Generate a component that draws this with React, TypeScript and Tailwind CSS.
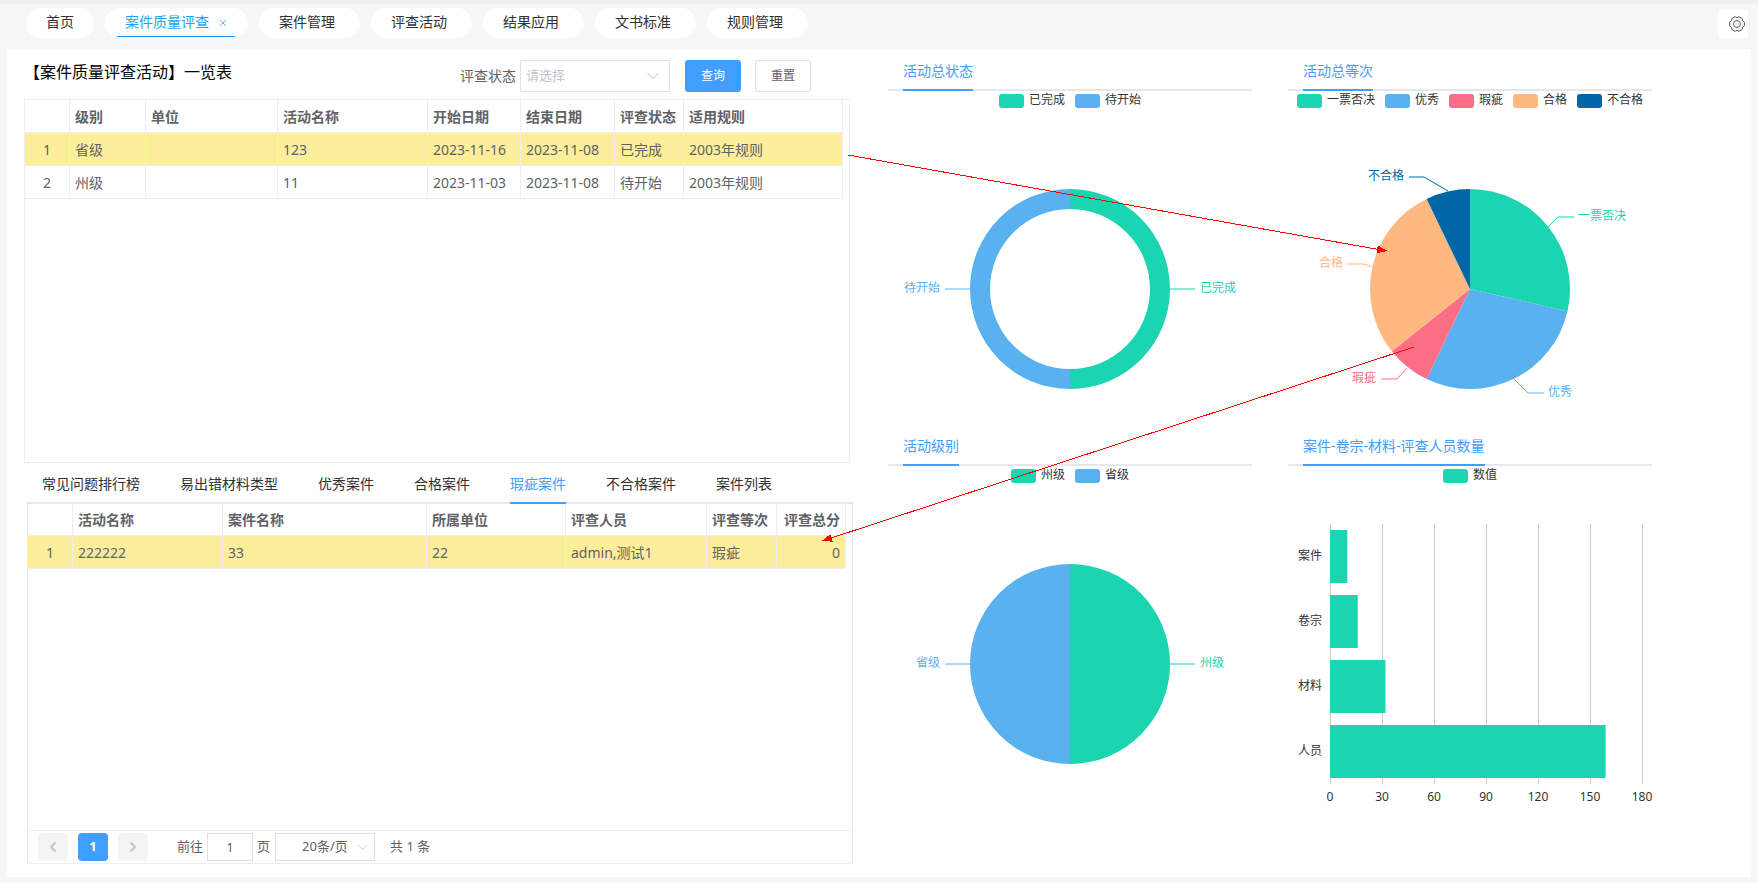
import React from 'react';
import { ChevronDown, ChevronLeft, ChevronRight } from 'lucide-react';

interface Slice {
  name: string;
  value: number;
  color: string;
}

interface Label {
  line: string;
  x: number;
  y: number;
  anchor: 'start' | 'end';
}

interface Column {
  title: string;
  width?: string;
  align?: string;
}

const GREEN = '#1bd4b0';
const BLUE = '#5ab1ef';

const navItems = ['案件管理', '评查活动', '结果应用', '文书标准', '规则管理'];

const tabs = ['常见问题排行榜', '易出错材料类型', '优秀案件', '合格案件', '瑕疵案件', '不合格案件', '案件列表'];

const activityColumns: Column[] = [
  { title: '', width: 'w-[45px]', align: 'text-center' },
  { title: '级别', width: 'w-[76px]' },
  { title: '单位', width: 'w-[132px]' },
  { title: '活动名称', width: 'w-[150px]' },
  { title: '开始日期', width: 'w-[93px]' },
  { title: '结束日期', width: 'w-[94px]' },
  { title: '评查状态', width: 'w-[69px]' },
  { title: '适用规则' },
];

const activityRows = [
  ['1', '省级', '', '123', '2023-11-16', '2023-11-08', '已完成', '2003年规则'],
  ['2', '州级', '', '11', '2023-11-03', '2023-11-08', '待开始', '2003年规则'],
];

const caseColumns: Column[] = [
  { title: '', width: 'w-[45px]', align: 'text-center' },
  { title: '活动名称', width: 'w-[150px]' },
  { title: '案件名称', width: 'w-[204px]' },
  { title: '所属单位', width: 'w-[139px]' },
  { title: '评查人员' },
  { title: '评查等次', width: 'w-[70px]' },
  { title: '评查总分', width: 'w-[69px]', align: 'text-right' },
];

const caseRows = [['1', '222222', '33', '22', 'admin,测试1', '瑕疵', '0']];

const statusData: Slice[] = [
  { name: '已完成', value: 1, color: GREEN },
  { name: '待开始', value: 1, color: BLUE },
];

const levelData: Slice[] = [
  { name: '州级', value: 1, color: GREEN },
  { name: '省级', value: 1, color: BLUE },
];

const gradeData: Slice[] = [
  { name: '一票否决', value: 4, color: GREEN },
  { name: '优秀', value: 4, color: BLUE },
  { name: '瑕疵', value: 1, color: '#fb6e85' },
  { name: '合格', value: 4, color: '#ffb880' },
  { name: '不合格', value: 1, color: '#0067a6' },
];

const countData = [
  { name: '案件', value: 10 },
  { name: '卷宗', value: 16 },
  { name: '材料', value: 32 },
  { name: '人员', value: 159 },
];

const halfLabels: Label[] = [
  { line: '282,178 307,178', x: 312, y: 176, anchor: 'start' },
  { line: '82,178 57,178', x: 52, y: 176, anchor: 'end' },
];

const gradeLabels: Label[] = [
  { line: '260,116 270,106 286,106', x: 290, y: 104, anchor: 'start' },
  { line: '226,268 240,282 256,282', x: 260, y: 280, anchor: 'start' },
  { line: '119,257 109,268 93,268', x: 88, y: 266, anchor: 'end' },
  { line: '85,156 75,153 59,153', x: 55, y: 151, anchor: 'end' },
  { line: '160,80 136,66 121,66', x: 116, y: 64, anchor: 'end' },
];

// Point on a circle around the chart centre, clockwise from 12 o'clock
const point = (ratio: number, r: number) => {
  const angle = ratio * Math.PI * 2;
  return `${182 + r * Math.sin(angle)},${178 - r * Math.cos(angle)}`;
};

const slicePath = (from: number, to: number, inner: number) => {
  const large = to - from > 0.5 ? 1 : 0;
  return `M${point(from, 100)} A100,100 0 ${large} 1 ${point(to, 100)} L${point(to, inner)} A${inner},${inner} 0 ${large} 0 ${point(from, inner)} Z`;
};

const PieChart: React.FC<{ data: Slice[]; labels: Label[]; inner?: number }> = ({ data, labels, inner = 0 }) => {
  const total = data.reduce((sum, d) => sum + d.value, 0);
  let start = 0;
  return (
    <svg viewBox="0 0 364 315" className="block w-full text-xs">
      {data.map((d, i) => {
        const from = start;
        start += d.value / total;
        return (
          <g key={d.name} fill={d.color}>
            <path d={slicePath(from, start, inner)} />
            <polyline points={labels[i].line} fill="none" stroke={d.color} />
            <text x={labels[i].x} y={labels[i].y} textAnchor={labels[i].anchor} dominantBaseline="central">
              {d.name}
            </text>
          </g>
        );
      })}
    </svg>
  );
};

const BarChart: React.FC = () => (
  <svg viewBox="0 0 364 315" className="block w-full overflow-visible text-xs" fill="#333">
    {[0, 30, 60, 90, 120, 150, 180].map((tick, i) => (
      <g key={tick}>
        <path d={`M${42.5 + i * 52},38 V298`} stroke="#ccc" />
        <text x={42 + i * 52} y={310} textAnchor="middle" dominantBaseline="central">
          {tick}
        </text>
      </g>
    ))}
    {countData.map((d, i) => (
      <g key={d.name}>
        <rect x={42} y={44 + i * 65} width={(d.value * 52) / 30} height={53} fill={GREEN} />
        <text x={34} y={69 + i * 65} textAnchor="end" dominantBaseline="central">
          {d.name}
        </text>
      </g>
    ))}
  </svg>
);

const ChartCard: React.FC<{ title: string; legend: { name: string; color: string }[]; children: React.ReactNode }> = ({
  title,
  legend,
  children,
}) => (
  <section>
    <div className="h-10 border-b-2 border-[#e4e7ed] pl-[15px]">
      <h3 className="inline-block h-10 border-b-2 border-[#409eff] text-sm leading-10 text-[#409eff]">{title}</h3>
    </div>
    <ul className="flex h-5 items-start justify-center gap-[10px] pt-[3px] text-xs leading-3 text-[#333]">
      {legend.map((item) => (
        <li key={item.name} className="flex gap-[5px]">
          <span className="h-[14px] w-[25px] rounded-[3px]" style={{ backgroundColor: item.color }} />
          {item.name}
        </li>
      ))}
    </ul>
    {children}
  </section>
);

const DataTable: React.FC<{ columns: Column[]; rows: string[][]; headHeight: string }> = ({
  columns,
  rows,
  headHeight,
}) => (
  <table className="w-full table-fixed border-separate border-spacing-0 text-sm leading-5 text-[#606266]">
    <thead>
      <tr className={headHeight}>
        {columns.map((col, i) => (
          <th
            key={i}
            className={`border-r border-b border-[#ebeef5] px-[5px] pt-px font-bold whitespace-nowrap ${col.width ?? ''} ${col.align ?? 'text-left'}`}
          >
            {col.title}
          </th>
        ))}
      </tr>
    </thead>
    <tbody>
      {rows.map((row, r) => (
        <tr key={r} className={r === 0 ? 'h-[33px] bg-[#fcee9b]' : 'h-[33px]'}>
          {row.map((cell, i) => (
            <td
              key={i}
              className={`border-r border-b border-[#ebeef5] px-[5px] pt-[2px] whitespace-nowrap ${columns[i].align ?? 'text-left'}`}
            >
              {cell}
            </td>
          ))}
        </tr>
      ))}
    </tbody>
  </table>
);

const App: React.FC = () => {
  return (
    <div className="relative min-h-screen bg-[#f7f7f7] px-[7px] pb-[6px] font-['Noto_Sans','Noto_Sans_CJK_SC',sans-serif]">
      <div className="-mx-[7px] h-1 bg-[#f0f0f0]" />

      {/* Top navigation */}
      <header className="flex h-[45px] items-start pt-1 pl-[19px]">
        <nav className="flex gap-[11px] text-sm leading-7 text-[#303133]">
          <a href="#" className="h-[30px] rounded-full bg-white px-5">
            首页
          </a>
          <div className="h-[30px] rounded-full bg-white pr-[13px] pl-3">
            <div className="flex h-[29px] items-start border-b border-[#1890ff] px-2 text-[#1aa5f8]">
              <a href="#">案件质量评查</a>
              <button aria-label="关闭" className="ml-[10px] flex h-[30px] items-center">
                <svg width="8" height="8" viewBox="0 0 8 8" stroke="#6fb4f5" className="block">
                  <path d="M1 1l6 6M7 1l-6 6" />
                </svg>
              </button>
            </div>
          </div>
          {navItems.map((item) => (
            <a key={item} href="#" className="h-[30px] rounded-full bg-white pr-[25px] pl-5">
              {item}
            </a>
          ))}
        </nav>
        <button aria-label="设置" className="mt-px mr-[3px] ml-auto h-[30px] w-[30px] rounded bg-white pl-[11px]">
          <svg width="16" height="16" viewBox="0 0 16 16" fill="none" stroke="#606266" strokeLinejoin="round">
            <path d="M15.37 6.160V9.840Q12.5 10.6 13.28 13.47L10.09 15.31Q8 13.2 5.910 15.31L2.720 13.47Q3.500 10.6 .63 9.840V6.160Q3.500 5.400 2.720 2.530L5.910 .69Q8 2.800 10.09 .69L13.28 2.530Q12.5 5.400 15.37 6.160Z" />
            <circle cx="8" cy="8" r="3.500" />
          </svg>
        </button>
      </header>

      <main className="flex min-h-[828px] bg-white">
        {/* Tables */}
        <div className="flex w-1/2 flex-col pt-[11px] pr-[26px] pb-[13px] pl-[17px]">
          <div className="flex h-[39px] items-start">
            <h2 className="text-base leading-6 whitespace-nowrap text-black">【案件质量评查活动】一览表</h2>
            <form className="mr-[42px] ml-auto flex items-center text-sm text-[#606266]">
              <label htmlFor="status">评查状态</label>
              <div className="relative ml-1">
                <select
                  id="status"
                  className="block h-8 w-[150px] appearance-none border border-[#dcdfe6] bg-white px-[5px] pb-[2px] text-[13px] text-[#c0c4cc]"
                >
                  <option>请选择</option>
                </select>
                <ChevronDown size={20} strokeWidth={1} className="pointer-events-none absolute top-[6px] right-[7px] text-[#a8abb2]" />
              </div>
              <button type="button" className="ml-[15px] h-8 w-14 rounded-[3px] bg-[#409eff] text-xs text-white">
                查询
              </button>
              <button type="reset" className="ml-[14px] h-8 w-14 rounded-[3px] border border-[#dcdfe6] bg-white text-xs">
                重置
              </button>
            </form>
          </div>

          <div className="mr-[3px] h-[364px] border border-[#ebeef5] pr-[6px]">
            <DataTable columns={activityColumns} rows={activityRows} headHeight="h-[33px]" />
          </div>

          <div className="ml-[3px] flex flex-1 flex-col">
            <div className="flex h-[41px] gap-10 border-b-2 border-[#e4e7ed] pl-[15px] text-sm text-[#303133]">
              {tabs.map((tab) => (
                <button
                  key={tab}
                  className={
                    tab === '瑕疵案件'
                      ? 'h-[41px] border-b-2 border-[#409eff] pt-[3px] whitespace-nowrap text-[#409eff]'
                      : 'h-[41px] border-b-2 border-transparent pt-[3px] whitespace-nowrap'
                  }
                >
                  {tab}
                </button>
              ))}
            </div>
            <div className="flex-1 border-x border-[#ebeef5] pr-[6px]">
              <DataTable columns={caseColumns} rows={caseRows} headHeight="h-8" />
            </div>

            {/* Pagination */}
            <div className="flex h-[34px] items-center border border-[#ebeef5] pl-[10px] text-[13px] text-[#606266]">
              <button aria-label="上一页" className="flex h-7 w-[30px] items-center justify-center rounded-sm bg-[#f4f4f5] text-[#c0c4cc]">
                <ChevronLeft size={16} strokeWidth={3} />
              </button>
              <button className="ml-[10px] h-7 w-[30px] rounded-sm bg-[#409eff] font-bold text-white">1</button>
              <button aria-label="下一页" className="ml-[10px] flex h-7 w-[30px] items-center justify-center rounded-sm bg-[#f4f4f5] text-[#c0c4cc]">
                <ChevronRight size={16} strokeWidth={3} />
              </button>
              <label htmlFor="page" className="ml-[29px]">
                前往
              </label>
              <input id="page" defaultValue="1" className="mx-1 h-7 w-[46px] border border-[#dcdfe6] text-center" />
              <span>页</span>
              <div className="relative ml-[5px]">
                <select
                  aria-label="每页条数"
                  className="block h-7 w-[100px] appearance-none border border-[#dcdfe6] bg-white pr-[27px] pl-[26px] text-center"
                >
                  <option>20条/页</option>
                </select>
                <ChevronDown size={15} strokeWidth={1} className="pointer-events-none absolute top-[7px] right-[5px] text-[#a8abb2]" />
              </div>
              <span className="ml-[15px]">共 1 条</span>
            </div>
          </div>
        </div>

        {/* Charts */}
        <div className="grid w-1/2 grid-cols-2 content-start gap-x-9 pt-[2px] pr-[99px] pl-[9px]">
          <ChartCard title="活动总状态" legend={statusData}>
            <PieChart data={statusData} labels={halfLabels} inner={80} />
          </ChartCard>
          <ChartCard title="活动总等次" legend={gradeData}>
            <PieChart data={gradeData} labels={gradeLabels} />
          </ChartCard>
          <ChartCard title="活动级别" legend={levelData}>
            <PieChart data={levelData} labels={halfLabels} />
          </ChartCard>
          <ChartCard title="案件-卷宗-材料-评查人员数量" legend={[{ name: '数值', color: GREEN }]}>
            <BarChart />
          </ChartCard>
        </div>
      </main>

      {/* Drill-down arrows drawn over the tables and charts */}
      <svg className="pointer-events-none absolute inset-0 h-full w-full" fill="red" stroke="red" shapeRendering="crispEdges">
        <defs>
          <marker id="arrow" viewBox="0 0 10 8" refX="10" refY="4" markerWidth="10" markerHeight="8" orient="auto">
            <path d="M0,0 L10,4 L0,8 Z" stroke="none" />
          </marker>
        </defs>
        <path d="M848,155 L1387,251" markerEnd="url(#arrow)" />
        <path d="M1414,347 L822,541" markerEnd="url(#arrow)" />
      </svg>
    </div>
  );
};

export default App;
